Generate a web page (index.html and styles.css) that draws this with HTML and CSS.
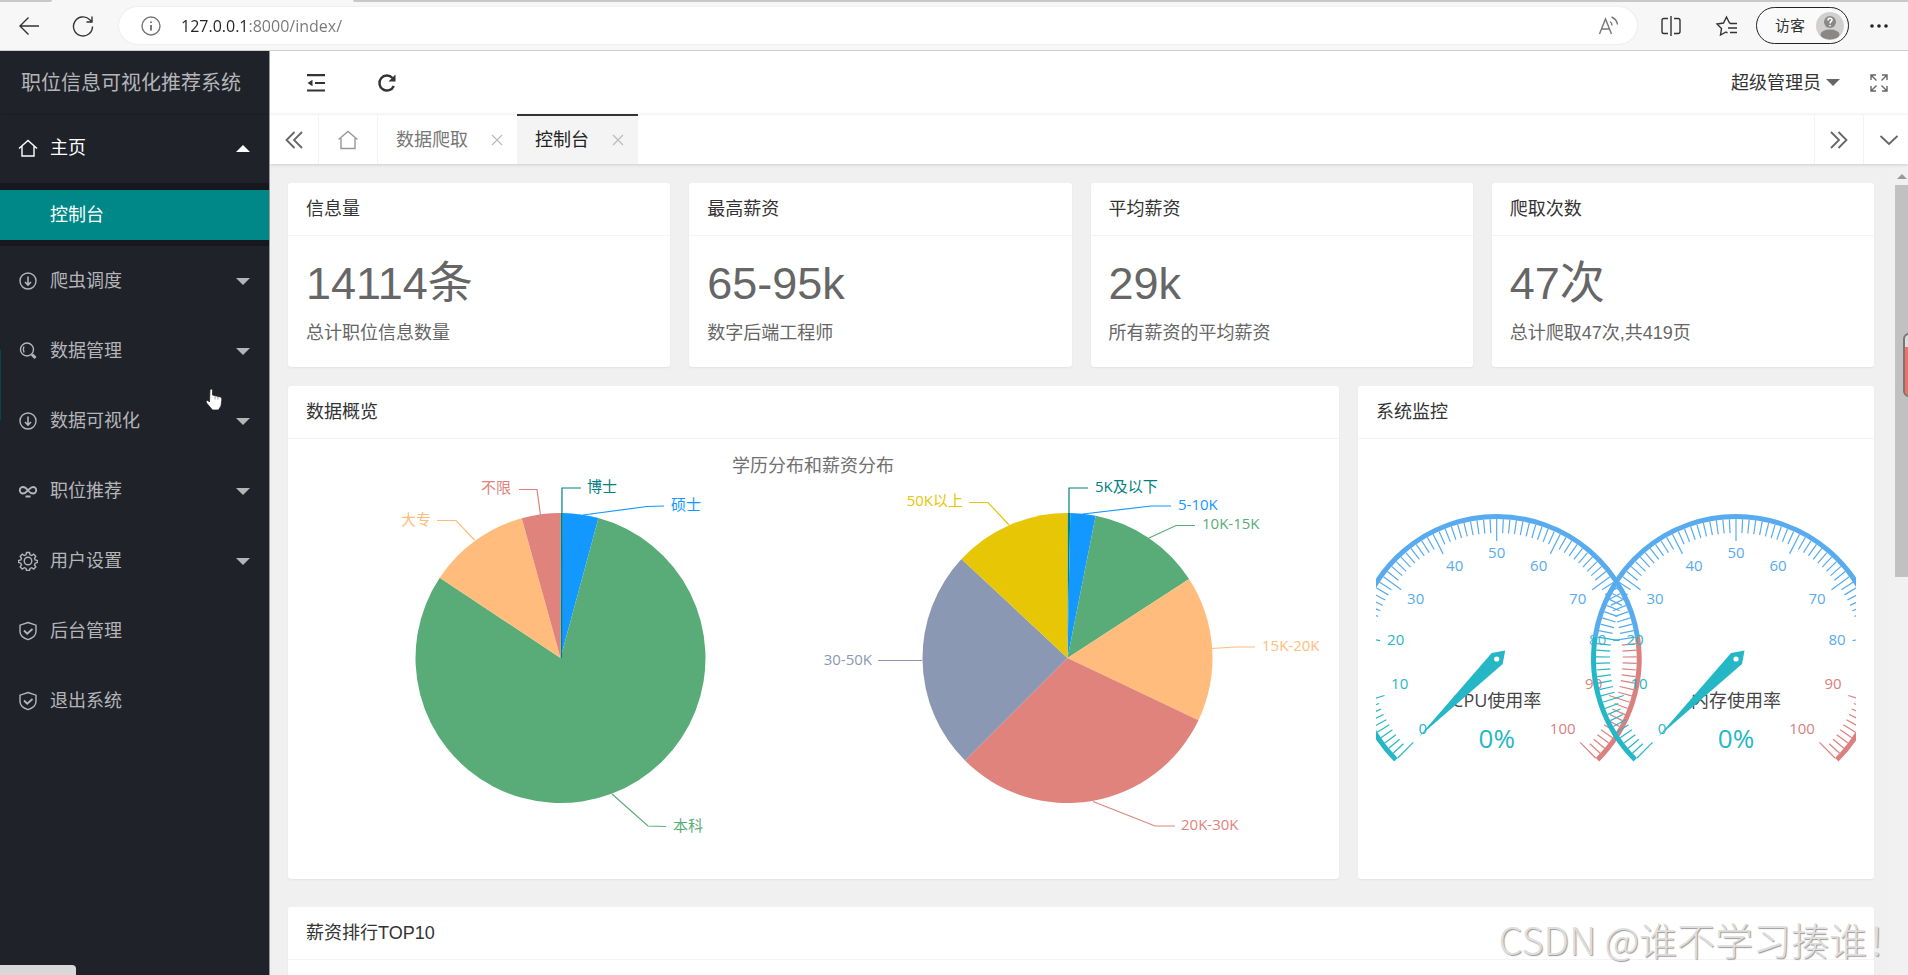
FILE: index.html
```html
<!DOCTYPE html>
<html lang="zh-CN">
<head>
<meta charset="utf-8">
<title>职位信息可视化推荐系统</title>
<link rel="stylesheet" href="styles.css">
</head>
<body>
<header class="browser">
  <div class="strip"><span class="strip-left"></span><span class="strip-tab"></span><span class="strip-right"></span></div>
  <div class="toolbar">
    <button class="tool" aria-label="后退"><svg class="ico24" viewBox="0 0 24 24"><path d="M22 12H3M11.500 3.500L3 12l8.500 8.500"/></svg></button>
    <button class="tool reload" aria-label="刷新"><svg class="ico24" viewBox="0 0 24 24"><path d="M21.500 12.500A9.500 9.500 0 1 1 18.500 5.500L21 8M21 2.500V8h-5.500"/></svg></button>
    <div class="address">
      <svg class="ico20 info" viewBox="0 0 20 20"><circle cx="10" cy="10" r="9"/><path d="M10 9v5.500M10 5.500v1.500" stroke-width="2"/></svg>
      <input class="url" type="text" aria-label="地址" value="127.0.0.1:8000/index/">
      <button class="tool" aria-label="朗读"><svg class="ico20 info" viewBox="0 0 20 20"><path d="M1.500 18L7.500 3l6 15M3.500 13h8M12 5.500c1.500 1 2 2.500 2 4M13.500 1c3.500 1.500 5.500 4 6 7.500"/></svg></button>
    </div>
    <button class="tool split" aria-label="分屏"><svg class="ico24" viewBox="0 0 24 24"><path d="M9 4.500H5a2 2 0 0 0-2 2v11a2 2 0 0 0 2 2h4M15 4.500h4a2 2 0 0 1 2 2v11a2 2 0 0 1-2 2h-4M12 2v20"/></svg></button>
    <button class="tool fav" aria-label="收藏夹"><svg class="ico24" viewBox="0 0 24 24"><path d="M16 9.500l-1.500-.5-3-6-3 6L2 10l4.500 4.500-1 6.500 5.500-3 1.500.8M15 9.500h7M13 14h9M15 18.500h7"/></svg></button>
    <button class="profile"><span>访客</span>
      <svg class="avatar" viewBox="0 0 28 28"><circle cx="14" cy="14" r="14" fill="#d2d0ce"/><circle cx="14" cy="10" r="6" fill="#8a8886"/><ellipse cx="14" cy="22.500" rx="9.500" ry="5" fill="#8a8886"/><path d="M12 8.500c0-3 4-3 4-.5 0 1.500-2 1.500-2 3.500M14 13v1.200" fill="none" stroke="#fff" stroke-width="1.600"/></svg>
    </button>
    <button class="tool" aria-label="更多"><svg class="ico24" viewBox="0 0 24 24"><g fill="#222" stroke="none"><circle cx="5" cy="12" r="1.800"/><circle cx="12" cy="12" r="1.800"/><circle cx="19" cy="12" r="1.800"/></g></svg></button>
  </div>
</header>

<div class="app">
  <aside class="side">
    <div class="logo">职位信息可视化推荐系统</div>
    <nav class="menu">
      <button class="item open"><svg class="ico20" viewBox="0 0 20 20"><path d="M1 10.500L10 2.500l9 8M4 8.500V18h12V8.500"/></svg><span>主页</span><i class="caret up"></i></button>
      <div class="sub"><a class="sub-item" href="#">控制台</a></div>
      <button class="item"><svg class="ico20" viewBox="0 0 20 20"><circle cx="10" cy="10" r="8"/><path d="M10 5.500v8M7 11l3 3 3-3" stroke-width="1.600"/></svg><span>爬虫调度</span><i class="caret"></i></button>
      <button class="item"><svg class="ico20" viewBox="0 0 20 20"><circle cx="9" cy="8.500" r="6.500"/><path d="M6 5.500c-1 1.800-1 4 0 6"/><path d="M14 13.500l3.500 3.500" stroke-width="3"/></svg><span>数据管理</span><i class="caret"></i></button>
      <button class="item"><svg class="ico20" viewBox="0 0 20 20"><circle cx="10" cy="10" r="8"/><path d="M10 5.500v8M7 11l3 3 3-3" stroke-width="1.600"/></svg><span>数据可视化</span><i class="caret"></i></button>
      <button class="item"><svg class="ico20" viewBox="0 0 20 20"><path d="M10 9.500C8 6.500 6.500 6 5 6a3 3 0 0 0 0 6.500c2 0 3-1 5-3s3-3.500 5-3.500a3 3 0 0 1 0 6.500c-1.500 0-3-.5-5-3zM7.500 15.500h5" stroke-width="1.800"/></svg><span>职位推荐</span><i class="caret"></i></button>
      <button class="item"><svg class="ico20" viewBox="0 0 20 20"><circle cx="10" cy="10" r="3.800"/><path d="M8.500 1.500h3l.5 2.300 1.700.7 2-1.300 2.100 2.100-1.300 2 .7 1.700 2.300.5v2l-2.300.7-.7 1.700 1.300 2-2.100 2.100-2-1.300-1.700.7-.5 2.100h-3L8 17.400l-1.700-.7-2 1.300-2.100-2.100 1.300-2-.7-1.700-2.300-.7v-2l2.300-.5.7-1.700-1.300-2 2.100-2.100 2 1.300L8 3.800z"/></svg><span>用户设置</span><i class="caret"></i></button>
      <a class="item" href="#"><svg class="ico20" viewBox="0 0 20 20"><path d="M10 1.500l8 2.700v6.300c0 3.500-3 6.500-8 8.200-5-1.700-8-4.700-8-8.200V4.200z"/><path d="M6 9.500l3.200 3.200L14.500 8" stroke-width="1.800"/></svg><span>后台管理</span></a>
      <a class="item" href="#"><svg class="ico20" viewBox="0 0 20 20"><path d="M10 1.500l8 2.700v6.300c0 3.500-3 6.500-8 8.200-5-1.700-8-4.700-8-8.200V4.200z"/><path d="M6 9.500l3.200 3.200L14.500 8" stroke-width="1.800"/></svg><span>退出系统</span></a>
    </nav>
    <span class="side-mark"></span>
    <svg class="pointer" viewBox="0 0 18 24"><path d="M5 1.500c1.500-1 2.500 0 2.500 1V7l8 2c1 .5 1.500 1.500 1.300 3l-.8 6-2.500 4H7.500L2 15.500c-2-3 .5-4 2-2l.5.500z" fill="#fff" stroke="#222" stroke-width=".8"/><path d="M10 7.500v4M13 8.500v3" stroke="#555" stroke-width=".6"/></svg>
    <span class="status"></span>
  </aside>

  <main class="main">
    <div class="topbar">
      <button class="tool" aria-label="折叠菜单"><svg class="ico20 bold" viewBox="0 0 20 20"><path d="M1 2.200h18M9 10h10M1 17.500h18" stroke-width="2.200"/><path d="M1.500 10L6.500 6.800v6.400z" fill="#333" stroke="none"/></svg></button>
      <button class="tool" aria-label="刷新页面"><svg class="ico20 bold" viewBox="0 0 20 20"><path d="M16.800 13A7.500 7.500 0 1 1 15.500 5" stroke-width="2.400"/><path d="M18.500 1.500v7h-7z" fill="#333" stroke="none"/></svg></button>
      <button class="user">超级管理员<i class="caret"></i></button>
      <button class="tool" aria-label="全屏"><svg class="ico20 full" viewBox="0 0 20 20"><path d="M2 7V2h5M13 2h5v5M18 13v5h-5M7 18H2v-5M2.500 2.500l5 5M17.500 2.500l-5 5M17.500 17.500l-5-5M2.500 17.500l5-5"/></svg></button>
    </div>
    <div class="tabs">
      <button class="tab-ctl" aria-label="向左"><svg class="ico20 gray" viewBox="0 0 20 20"><path d="M10.500 2L2.500 10l8 8M18 2l-8 8 8 8"/></svg></button>
      <a class="tab-home" href="#" aria-label="首页"><svg class="ico20 lite" viewBox="0 0 20 20"><path d="M0.500 9.500L10 1.500l9.500 8M3 8v10.500h14V8"/></svg></a>
      <div class="tab"><a href="#">数据爬取</a><button class="close" aria-label="关闭"><svg viewBox="0 0 12 12"><path d="M1 1l10 10M11 1L1 11"/></svg></button></div>
      <div class="tab active"><a href="#">控制台</a><button class="close" aria-label="关闭"><svg viewBox="0 0 12 12"><path d="M1 1l10 10M11 1L1 11"/></svg></button></div>
      <button class="tab-ctl next" aria-label="向右"><svg class="ico20 gray" viewBox="0 0 20 20"><path d="M2 2l8 8-8 8M9.500 2l8 8-8 8"/></svg></button>
      <button class="tab-ctl more" aria-label="标签操作"><svg class="ico20 gray" viewBox="0 0 20 20"><path d="M1.500 6l8.500 8 8.500-8"/></svg></button>
    </div>
    <div class="body">
      <div class="content">
        <section class="card stat"><h2>信息量</h2><div class="stat-body"><p class="num">14114条</p><p class="note">总计职位信息数量</p></div></section>
        <section class="card stat"><h2>最高薪资</h2><div class="stat-body"><p class="num">65-95k</p><p class="note">数字后端工程师</p></div></section>
        <section class="card stat"><h2>平均薪资</h2><div class="stat-body"><p class="num">29k</p><p class="note">所有薪资的平均薪资</p></div></section>
        <section class="card stat"><h2>爬取次数</h2><div class="stat-body"><p class="num">47次</p><p class="note">总计爬取47次,共419页</p></div></section>
        <section class="card wide"><h2>数据概览</h2><div class="chart"><svg id="pies" viewBox="0 1 1015 440" role="img" aria-label="学历分布和薪资分布"></svg></div></section>
        <section class="card narrow"><h2>系统监控</h2><div class="chart"><svg id="gauges" viewBox="0 0 480 440" role="img" aria-label="系统监控"></svg></div></section>
        <section class="card whole"><h2>薪资排行TOP10</h2><div class="chart-space"></div></section>
      </div>
      <div class="scroll"><i class="scroll-up"></i><span class="thumb"></span></div>
    </div>
    <span class="recorder"></span>
    <div class="watermark">CSDN @谁不学习揍谁！</div>
  </main>
</div>
<script src="charts.js"></script>
</body>
</html>
```

FILE: styles.css
```css
* { box-sizing: border-box; }
body {
  margin: 0;
  height: 100vh;
  overflow: hidden;
  display: flex;
  flex-direction: column;
  font-family: "Liberation Sans", "Noto Sans CJK SC", sans-serif;
  font-size: 18px;
  line-height: 24px;
  color: #333;
  background: #f0f0f0;
}
button, input { font: inherit; color: inherit; background: none; border: 0; padding: 0; margin: 0; }
a { color: inherit; text-decoration: none; }
h2, p { margin: 0; font-weight: 400; }
svg { display: block; fill: none; stroke: currentColor; stroke-width: 1.4; }
.ico24 { width: 24px; height: 24px; }
.ico20 { width: 20px; height: 20px; flex: none; }

/* browser frame */
.browser { flex: none; height: 51px; background: #f7f7f7; border-bottom: 1px solid #cfcfcf; position: relative; }
.strip { position: absolute; inset: 0 0 auto 0; display: flex; height: 2px; }
.strip-left { width: 52px; background: #c8c8c8; border-bottom-right-radius: 2px; }
.strip-tab { width: 301px; }
.strip-right { flex: 1; background: #c8c8c8; border-bottom-left-radius: 2px; }
.toolbar { display: flex; align-items: center; height: 51px; padding: 0 17px; color: #333; }
.tool { flex: none; }
.reload { margin: 0 24px 0 30px; }
.address { flex: 1; height: 37px; border-radius: 19px; background: #fff; box-shadow: 0 0 2px #ddd; display: flex; align-items: center; padding: 0 19px 0 22px; }
.info { color: #777; }
.url {
  flex: 1;
  margin-left: 20px;
  font-family: "Open Sans", sans-serif;
  font-size: 16px;
  background: linear-gradient(90deg, #222 68px, #777 68px);
  background-clip: text;
  -webkit-background-clip: text;
  -webkit-text-fill-color: transparent;
}
.split { margin: 0 32px 0 22px; }
.fav { margin-right: 17px; }
.profile { width: 93px; height: 37px; border: 1px solid #222; border-radius: 19px; font-size: 15px; display: flex; align-items: center; justify-content: flex-end; gap: 11px; padding-right: 4px; margin-right: 18px; background: #fafafa; }
.avatar { width: 28px; height: 28px; stroke: none; }

.app { flex: 1; min-height: 0; display: flex; }

/* sidebar */
.side { position: relative; flex: none; width: 270px; background: #20222a; border-right: 1px solid #999; color: #b4b5b8; overflow: hidden; }
.logo { height: 62px; line-height: 64px; font-size: 20px; padding-left: 21px; box-shadow: 0 1px 2px rgba(0, 0, 0, .15); white-space: nowrap; }
.menu { display: flex; flex-direction: column; }
.item { height: 70px; display: flex; align-items: center; gap: 12px; padding: 0 19px 0 18px; text-align: left; }
.item.open { color: #fff; }
.caret { width: 0; height: 0; border: 7px solid transparent; border-top-color: currentColor; border-bottom-width: 0; margin-left: auto; }
.caret.up { border-top-width: 0; border-bottom: 7px solid currentColor; }
.sub { padding: 7px 0 6px; background: #16181d; }
.sub-item { display: block; height: 50px; line-height: 50px; padding-left: 50px; background: #008889; color: #fff; }
.side-mark { position: absolute; left: 0; top: 299px; width: 1px; height: 70px; background: #00484c; }
.pointer { position: absolute; left: 205px; top: 337px; width: 18px; height: 24px; }
.status { position: absolute; left: 0; bottom: 0; width: 76px; height: 10px; background: #d8d8d8; border-top-right-radius: 4px; }

/* header and tabs */
.main { flex: 1; min-width: 0; display: flex; flex-direction: column; position: relative; overflow: hidden; }
.topbar { flex: none; height: 63px; background: #fff; display: flex; align-items: center; gap: 51px; padding: 0 19px 0 36px; }
.user { display: flex; align-items: center; gap: 5px; margin-left: auto; margin-right: -22px; }
.user .caret { color: #666; }
.bold { color: #333; }
.full { color: #666; }
.tabs { flex: none; height: 50px; background: #fff; border-top: 1px solid #f3f3f3; box-shadow: 0 1px 3px rgba(0, 0, 0, .15); display: flex; position: relative; }
.tab-ctl, .tab-home { flex: none; width: 49px; border-right: 1px solid #f3f3f3; display: flex; align-items: center; justify-content: center; }
.tab-home { width: 59px; }
.gray { color: #666; stroke-width: 1.8; }
.lite { color: #999; }
.tab { display: flex; align-items: center; gap: 23px; padding: 0 14px 0 18px; color: #777; }
.tab.active { background: #f4f4f4; color: #222; border-top: 2px solid #333; margin-top: -1px; }
.close { width: 12px; height: 12px; color: #bbb; }
.close svg { width: 12px; height: 12px; stroke-width: 1.2; }
.next { margin-left: auto; width: 50px; border-left: 1px solid #f3f3f3; }
.more { width: 50px; margin-right: -6px; border: 0; }

/* page */
.body { flex: 1; min-height: 0; display: flex; overflow: hidden; }
.content { flex: 1; min-width: 0; display: grid; grid-template-columns: repeat(12, minmax(0, 1fr)); align-content: start; gap: 19px; padding: 19px 21px 0 18px; }
.card { background: #fff; border-radius: 3px; box-shadow: 0 1px 2px rgba(0, 0, 0, .06); }
.card h2 { height: 53px; line-height: 53px; padding: 0 18px; font-size: 18px; border-bottom: 1px solid #f4f4f4; }
.stat { grid-column: span 3; }
.wide { grid-column: span 8; }
.narrow { grid-column: span 4; }
.whole { grid-column: span 12; margin-top: 9px; }
.stat-body { padding: 18px; color: #666; }
.num { font-size: 45px; line-height: 60px; }
.note { padding-top: 4px; line-height: 31px; }
.chart { padding: 0 18px; }
.chart svg { width: 100%; height: auto; overflow: hidden; stroke: none; font-family: "Open Sans", "Noto Sans CJK SC", sans-serif; font-size: 15px; }
.chart-space { height: 400px; }
.chart .title { font-size: 18px; fill: #707070; }
.chart .name { font-size: 18px; fill: #464646; }
.chart .value { font-size: 26px; fill: #26b7c6; }
.scroll { flex: none; width: 13px; padding-top: 10px; background: #f1f1f1; display: flex; flex-direction: column; align-items: center; }
.scroll-up { border: 5px solid transparent; border-top-width: 0; border-bottom-color: #999; }
.thumb { width: 13px; height: 392px; margin-top: 6px; background: #c1c1c1; }
.recorder { position: absolute; right: -10px; top: 282px; width: 15px; height: 64px; border: 2px solid #777; border-radius: 6px; background: linear-gradient(#ddd 12px, #f2705f 12px); }
.watermark { position: absolute; right: 3px; bottom: 8px; font-family: "Noto Sans CJK SC", sans-serif; font-weight: 300; font-size: 38px; line-height: 56px; color: #dedede; text-shadow: 1px 1px 1px #999; white-space: nowrap; }
```

FILE: charts.js
```js
const NS = 'http://www.w3.org/2000/svg';

function add(parent, tag, attrs, text) {
  const el = document.createElementNS(NS, tag);
  for (const key in attrs) el.setAttribute(key, attrs[key]);
  if (text !== undefined) el.textContent = text;
  parent.appendChild(el);
  return el;
}

// Angle is in degrees, clockwise from twelve o'clock.
function at(cx, cy, r, deg) {
  const a = deg * Math.PI / 180;
  return [cx + r * Math.sin(a), cy - r * Math.cos(a)];
}

function label(svg, x, y, text, fill, anchor) {
  add(svg, 'text', { x, y: y + 5, fill, 'text-anchor': anchor }, text);
}

function pie(svg, cx, cy, r, slices) {
  let from = 0;
  slices.forEach(s => {
    const a = at(cx, cy, r, from), b = at(cx, cy, r, s.to);
    const large = s.to - from > 180 ? 1 : 0;
    add(svg, 'path', { d: `M${cx} ${cy}L${a}A${r} ${r} 0 ${large} 1 ${b}Z`, fill: s.color });
    from = s.to;
  });
  slices.forEach(s => {
    add(svg, 'polyline', { points: s.line, fill: 'none', stroke: s.color, 'stroke-width': 1.2 });
    label(svg, s.x, s.y, s.name, s.color, s.end ? 'end' : 'start');
  });
}

const pies = document.getElementById('pies');
add(pies, 'text', { x: 507, y: 34, class: 'title', 'text-anchor': 'middle' }, '学历分布和薪资分布');
pie(pies, 254.5, 220, 145, [
  { name: '博士', to: 0.8, color: '#008080', line: '255.5,220 256,50 275,50', x: 281, y: 49 },
  { name: '硕士', to: 15.2, color: '#1398ff', line: '277,77 341,68.5 358,68', x: 365, y: 67 },
  { name: '本科', to: 303.6, color: '#59ac78', line: '306,356 342,388 360,388.5', x: 367, y: 388 },
  { name: '大专', to: 344.5, color: '#ffbc7d', line: '131,82.5 150,82.5 168.5,102', x: 125, y: 82, end: true },
  { name: '不限', to: 360, color: '#e0837d', line: '213,51.5 231,51.5 234.500,77', x: 205, y: 50, end: true }
]);
pie(pies, 761.5, 220, 145, [
  { name: '5K及以下', to: 1.1, color: '#008080', line: '763,76 763,50 782,50', x: 789, y: 49 },
  { name: '5-10K', to: 11.2, color: '#1398ff', line: '777,76 845,68 865,68', x: 872, y: 67 },
  { name: '10K-15K', to: 57, color: '#59ac78', line: '843,100 870,87.5 889,87.5', x: 896, y: 86 },
  { name: '15K-20K', to: 115.4, color: '#ffbc7d', line: '906,210.5 929,209 949,209', x: 956, y: 208 },
  { name: '20K-30K', to: 225, color: '#e0837d', line: '787,363.5 849,388 869,388', x: 875, y: 387 },
  { name: '30-50K', to: 313, color: '#8b98b3', line: '572,222.5 616,222.5', x: 566, y: 222, end: true },
  { name: '50K以上', to: 360, color: '#e6c605', line: '663,64.5 682,64.5 703,87', x: 657, y: 63, end: true }
]);

const TEAL = '#26b7c6', BLUE = '#58abee', RED = '#da807e';
const MARKS = [[-74, 70], [-97, 25], [-101, -19], [-81, -60], [-42, -93], [0, -106],
  [42, -93], [81, -60], [101, -19], [97, 25], [66, 70]];

function gauge(svg, cx, cy, name) {
  const angle = v => -135 + v * 2.7;
  const color = v => v <= 20 ? TEAL : v <= 80 ? BLUE : RED;
  [[0, 20, TEAL], [20, 80, BLUE], [80, 100, RED]].forEach(([from, to, stroke]) => {
    const large = to - from > 66 ? 1 : 0;
    const d = `M${at(cx, cy, 142.5, angle(from))}A142.5 142.5 0 ${large} 1 ${at(cx, cy, 142.5, angle(to))}`;
    add(svg, 'path', { d, fill: 'none', stroke, 'stroke-width': 5 });
  });
  for (let v = 0; v <= 100; v++) {
    const [x1, y1] = at(cx, cy, 140, angle(v));
    const [x2, y2] = at(cx, cy, v % 10 ? 126 : 118, angle(v));
    add(svg, 'line', { x1, y1, x2, y2, stroke: color(v), 'stroke-width': 1.2 });
  }
  MARKS.forEach(([dx, dy], i) => label(svg, cx + dx, cy + dy, String(i * 10), color(i * 10), 'middle'));
  add(svg, 'text', { x: cx, y: cy + 48, class: 'name', 'text-anchor': 'middle' }, name);
  add(svg, 'path', { d: `M${cx - 78} ${cy + 78}L${cx - 5} ${cy - 6}L${cx + 8.5} ${cy - 8.5}L${cx + 6} ${cy + 5}Z`, fill: TEAL });
  add(svg, 'circle', { cx, cy, r: 2.6, fill: '#fff' });
  add(svg, 'text', { x: cx, y: cy + 89, class: 'value', 'text-anchor': 'middle' }, '0%');
}

const gauges = document.getElementById('gauges');
gauge(gauges, 120.7, 220, 'CPU使用率');
gauge(gauges, 360, 220, '内存使用率');
```
